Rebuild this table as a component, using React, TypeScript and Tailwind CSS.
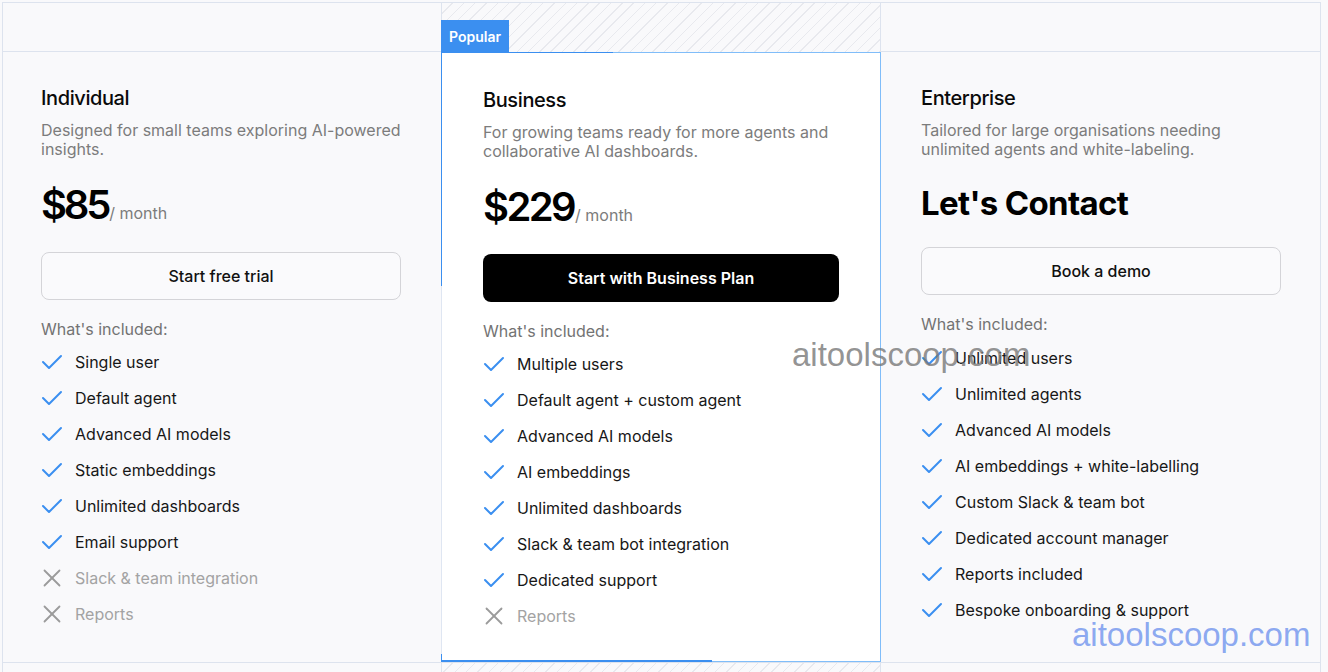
import React from "react";

const Check = () => (
  <svg width="22" height="16" viewBox="0 0 22 16" fill="none" stroke="#3b8ff0" strokeWidth="2" strokeLinecap="round" strokeLinejoin="round">
    <path d="M2 8 8 14 20 2" />
  </svg>
);

const XIcon = () => (
  <svg width="18" height="18" viewBox="0 0 18 18" fill="none" stroke="#9b9b9b" strokeWidth="1.8" strokeLinecap="round">
    <path d="M1.5 1.5 16.5 16.5" />
    <path d="M16.5 1.5 1.5 16.5" />
  </svg>
);

type Item = { t: string; ok: boolean };

const Features = ({ items, mt }: { items: Item[]; mt: string }) => (
  <div className={`flex flex-col gap-3 ${mt}`}>
    {items.map((it) => (
      <div key={it.t} className="flex items-center h-6 gap-3">
        <div className="w-[22px] flex justify-center">{it.ok ? <Check /> : <XIcon />}</div>
        <span className={`text-[16px] leading-6 ${it.ok ? "text-[#171717]" : "text-[#a3a3a3]"}`}>{it.t}</span>
      </div>
    ))}
  </div>
);

const stripes =
  "bg-[repeating-linear-gradient(135deg,transparent_0px,transparent_7px,#e8e9ee_7px,#e8e9ee_8px)]";

export default function App() {
  return (
    <div className="relative w-[1328px] h-[672px] overflow-hidden bg-[#f9f9fb] pt-[2px] pl-[2px] font-['Inter',sans-serif]">
      {/* top row */}
      <div className="flex h-[50px]">
        <div className="w-[439px] border-l border-t border-b border-[#dde3ee]" />
        <div className={`relative w-[440px] border-l border-r border-t border-[#dde3ee] ${stripes}`}>
          <div className="absolute left-[-1px] bottom-[-1px] h-[33px] px-[8px] bg-[#3b8ff0] text-white text-[14px] font-semibold flex items-center">
            Popular
          </div>
        </div>
        <div className="w-[440px] border-r border-t border-b border-[#dde3ee]" />
      </div>

      {/* main row */}
      <div className="flex h-[610px]">
        {/* Individual */}
        <div className="w-[439px] border-l border-[#dde3ee] pl-[38px] pt-[32px]">
          <div className="text-[20px] leading-[28px] font-medium tracking-[-0.02em] text-[#0a0a0a]">Individual</div>
          <p className="mt-[9px] text-[16px] leading-[19px] text-[#7c7c7c] w-[370px]">
            Designed for small teams exploring AI-powered insights.
          </p>
          <div className="mt-[26px] flex items-baseline">
            <span className="text-[40px] leading-[40px] font-semibold tracking-[-0.08em] text-black">$85</span>
            <span className="ml-[1px] text-[16px] text-[#7c7c7c]">/ month</span>
          </div>
          <button className="mt-[27px] w-[360px] h-[48px] rounded-lg border border-[#d4d4d8] bg-[#fafafc] text-[16px] font-medium text-[#111]">
            Start free trial
          </button>
          <div className="mt-[17px] text-[16px] leading-6 text-[#737373]">What's included:</div>
          <Features
            mt="mt-[9px]"
            items={[
              { t: "Single user", ok: true },
              { t: "Default agent", ok: true },
              { t: "Advanced AI models", ok: true },
              { t: "Static embeddings", ok: true },
              { t: "Unlimited dashboards", ok: true },
              { t: "Email support", ok: true },
              { t: "Slack & team integration", ok: false },
              { t: "Reports", ok: false },
            ]}
          />
        </div>

        {/* Business */}
        <div className="relative w-[440px] bg-white border border-[#80bdf9] border-l-[#dfe6f2] pl-[41px] pt-[33px]">
          <div className="absolute left-[-1px] top-[-1px] w-[172px] h-px bg-[#3b8ff0]" />
          <div className="absolute left-[-1px] top-[-1px] w-px h-[234px] bg-[#3b8ff0]" />
          <div className="absolute left-[-1px] bottom-[-1px] w-[271px] h-[2px] bg-[#3b8ff0]" />
          <div className="absolute left-[-1px] bottom-[-1px] w-px h-[8px] bg-[#3b8ff0]" />
          <div className="text-[20px] leading-[28px] font-medium tracking-[-0.02em] text-[#0a0a0a]">Business</div>
          <p className="mt-[9px] text-[16px] leading-[19px] text-[#7c7c7c] w-[370px]">
            For growing teams ready for more agents and collaborative AI dashboards.
          </p>
          <div className="mt-[26px] flex items-baseline">
            <span className="text-[40px] leading-[40px] font-semibold tracking-[-0.065em] text-black">$229</span>
            <span className="ml-[1px] text-[16px] text-[#7c7c7c]">/ month</span>
          </div>
          <button className="mt-[27px] w-[356px] h-[48px] rounded-lg bg-black text-[16px] font-semibold text-white">
            Start with Business Plan
          </button>
          <div className="mt-[17px] text-[16px] leading-6 text-[#737373]">What's included:</div>
          <Features
            mt="mt-[9px]"
            items={[
              { t: "Multiple users", ok: true },
              { t: "Default agent + custom agent", ok: true },
              { t: "Advanced AI models", ok: true },
              { t: "AI embeddings", ok: true },
              { t: "Unlimited dashboards", ok: true },
              { t: "Slack & team bot integration", ok: true },
              { t: "Dedicated support", ok: true },
              { t: "Reports", ok: false },
            ]}
          />
        </div>

        {/* Enterprise */}
        <div className="w-[440px] border-r border-[#dde3ee] pl-[40px] pt-[32px]">
          <div className="text-[20px] leading-[28px] font-medium tracking-[-0.02em] text-[#0a0a0a]">Enterprise</div>
          <p className="mt-[9px] text-[16px] leading-[19px] text-[#7c7c7c] w-[370px]">
            Tailored for large organisations needing unlimited agents and white-labeling.
          </p>
          <div className="mt-[24px] text-[33px] leading-[40px] font-bold tracking-[-0.02em] text-black">Let's Contact</div>
          <button className="mt-[24px] w-[360px] h-[48px] rounded-lg border border-[#d4d4d8] bg-[#fafafc] text-[16px] font-medium text-[#111]">
            Book a demo
          </button>
          <div className="mt-[17px] text-[16px] leading-6 text-[#737373]">What's included:</div>
          <Features
            mt="mt-[10px]"
            items={[
              { t: "Unlimited users", ok: true },
              { t: "Unlimited agents", ok: true },
              { t: "Advanced AI models", ok: true },
              { t: "AI embeddings + white-labelling", ok: true },
              { t: "Custom Slack & team bot", ok: true },
              { t: "Dedicated account manager", ok: true },
              { t: "Reports included", ok: true },
              { t: "Bespoke onboarding & support", ok: true },
            ]}
          />
        </div>
      </div>

      {/* bottom row */}
      <div className="flex h-[20px]">
        <div className="w-[439px] border-l border-t border-[#dde3ee]" />
        <div className={`w-[440px] border-l border-r border-t border-[#dde3ee] ${stripes}`} />
        <div className="w-[440px] border-r border-t border-[#dde3ee]" />
      </div>

      {/* watermarks */}
      <div className="absolute left-[792px] top-[336px] text-[33px] leading-[38px] font-['Liberation_Sans',Arial,sans-serif] text-[#777777]/80 pointer-events-none">
        aitoolscoop.com
      </div>
      <div className="absolute left-[1072px] top-[616px] text-[33px] leading-[38px] font-['Liberation_Sans',Arial,sans-serif] text-[#6f93ee]/80 pointer-events-none">
        aitoolscoop.com
      </div>
    </div>
  );
}
